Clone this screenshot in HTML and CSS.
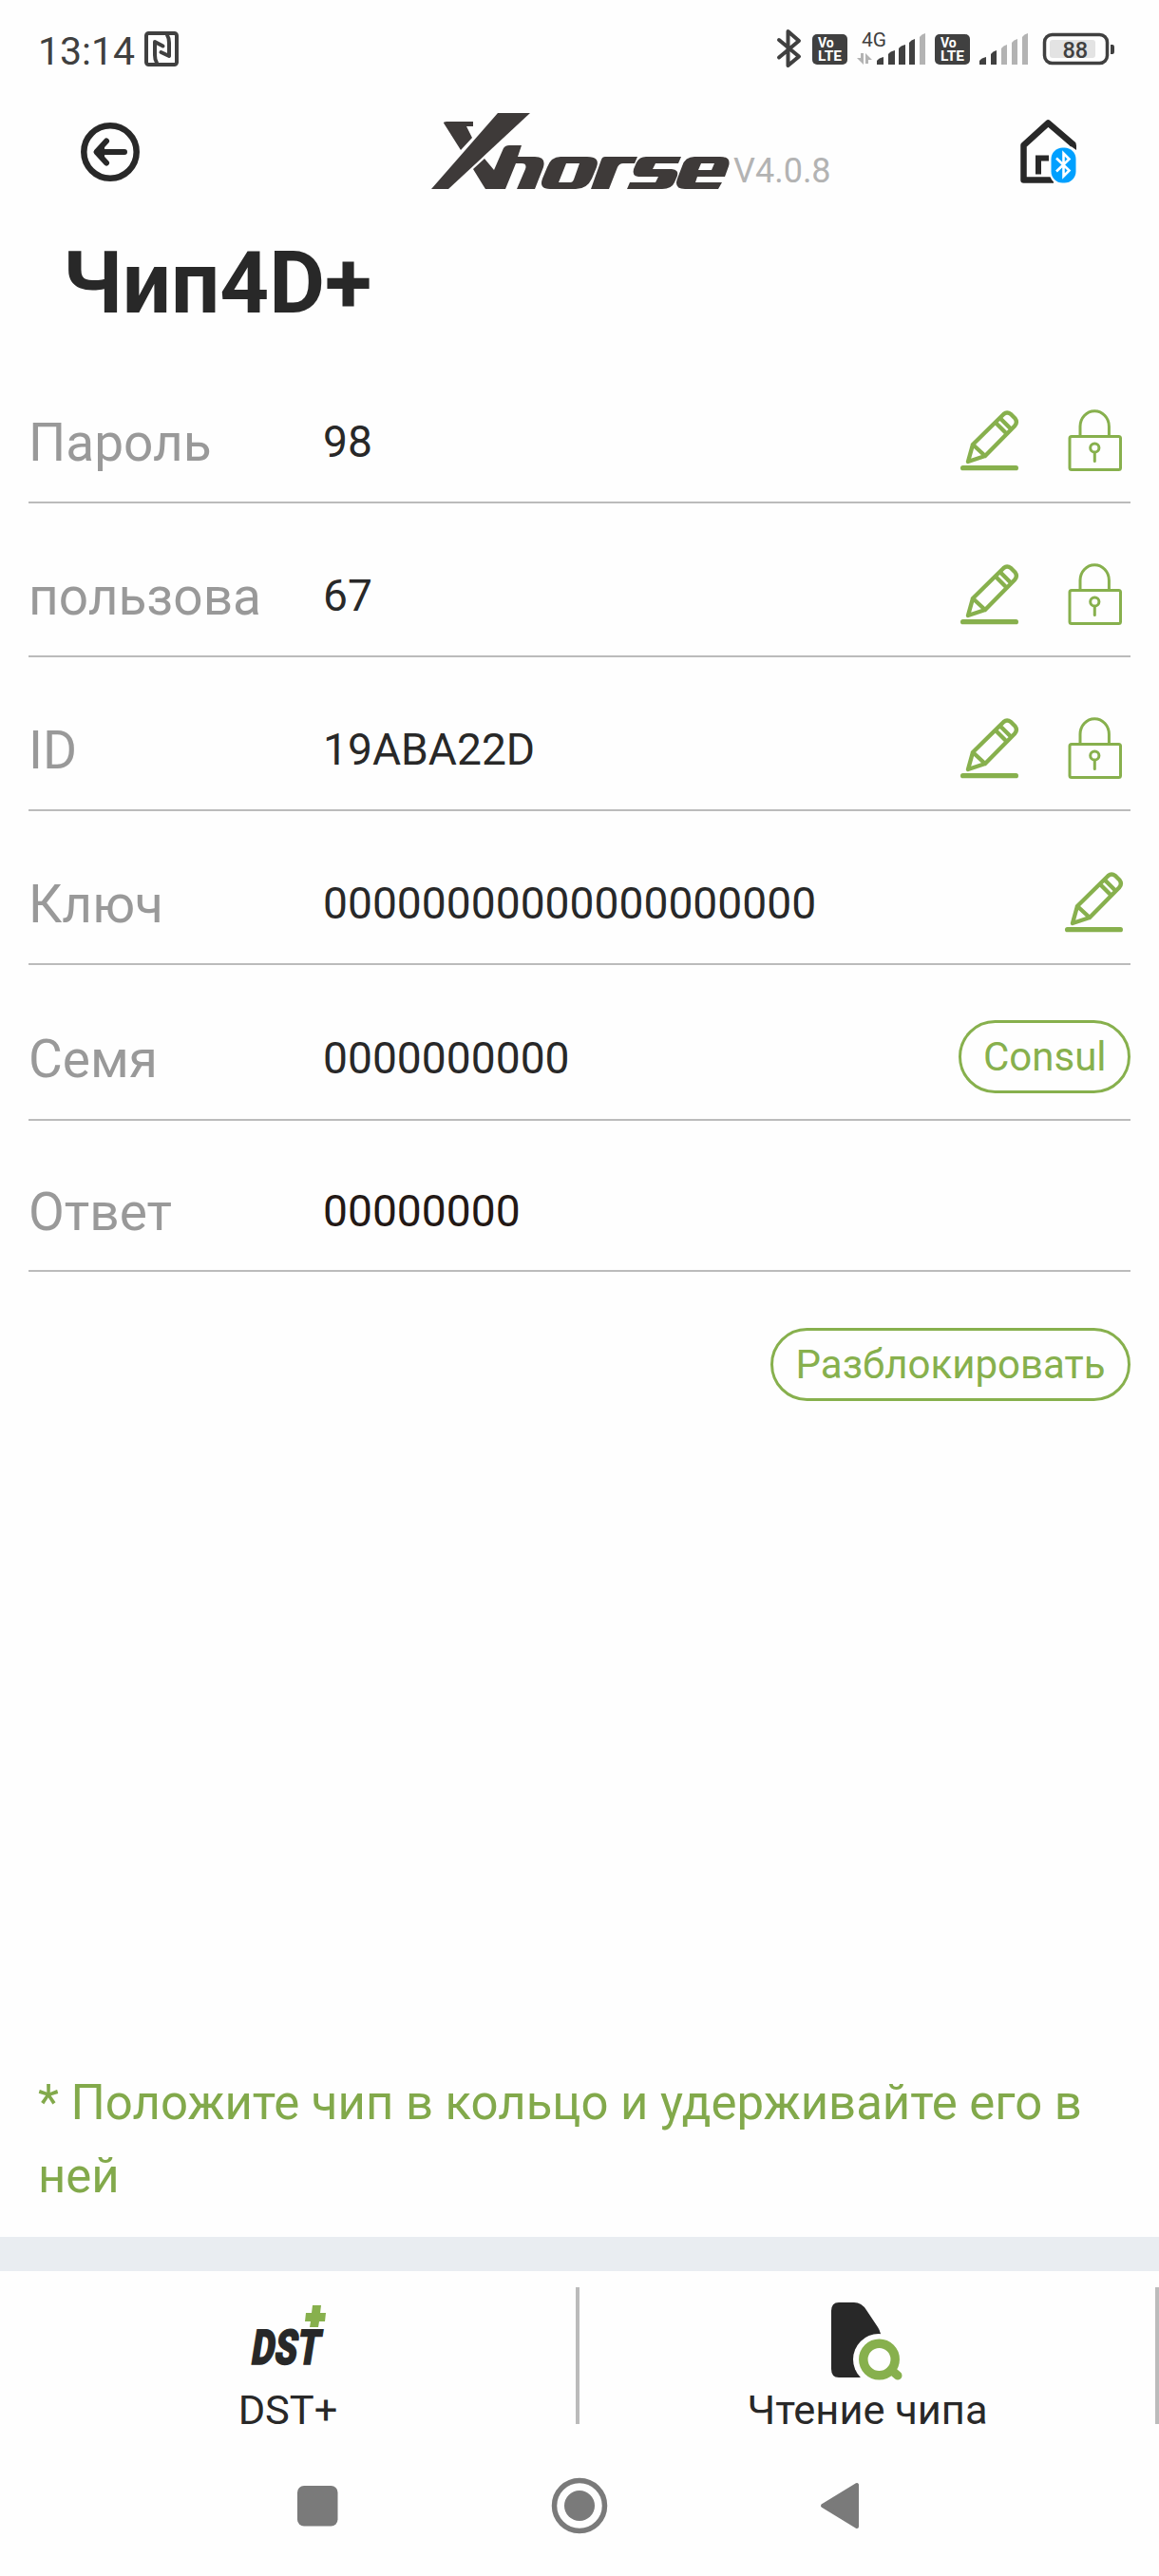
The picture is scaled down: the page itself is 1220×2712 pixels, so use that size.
FILE: index.html
```html
<!DOCTYPE html>
<html lang="ru">
<head>
<meta charset="utf-8">
<title>Чип4D+</title>
<link rel="stylesheet" href="styles.css">
</head>
<body>
<svg class="defs" width="0" height="0">
  <symbol id="pencil" viewBox="0 0 64 68">
    <g fill="none" stroke="#87b04d" stroke-linejoin="round" stroke-linecap="round">
      <path stroke-width="5.200" d="M3.600 62.700H59.400"/>
      <path stroke-width="4.400" d="M9 56 14 38 46.500 6Q50 3 54 6L58.500 10.500Q61.500 14.500 58 18.500L27 50ZM14 38 27 50M38 15 49.500 26.500M43 10.500 54.500 22"/>
    </g>
  </symbol>
  <symbol id="lock" viewBox="0 0 64 68">
    <g fill="none" stroke="#87b04d" stroke-width="3">
      <path d="M17 29V19a15 16 0 0 1 30.400 0V29"/>
      <rect x="6" y="29.500" width="53.500" height="35" rx="2"/>
      <circle cx="32.300" cy="41.500" r="4.600"/>
      <path stroke-linecap="round" d="M32.300 46.500V55.500"/>
    </g>
  </symbol>
</svg>
<header class="status">
  <span class="time">13:14</span>
  <svg class="nfc" viewBox="0 0 36 37" fill="none" stroke="#404040">
    <rect x="2" y="2" width="32" height="33" rx="2.500" stroke-width="4"/>
    <path stroke-width="4" stroke-linejoin="round" stroke-linecap="round" d="M13 33Q11 30 11 25V11L19.500 15.500M17.500 22 26 26V12Q26 7 24 4"/>
  </svg>
  <svg class="tray" viewBox="810 28 370 46">
    <path fill="none" stroke="#404040" stroke-width="4" stroke-linejoin="round" stroke-linecap="round" d="M820 42 841 59.500 829.500 69V33L841 43 820 60.500"/>
    <g id="volte"><rect x="855" y="36" width="37" height="32" rx="5" fill="#404040"/>
    <text x="861" y="50" class="badge">Vo</text><text x="861" y="63.500" class="badge" textLength="25" lengthAdjust="spacingAndGlyphs">LTE</text></g>
    <use href="#volte" x="129"/>
    <text x="907" y="49" class="net" textLength="26" lengthAdjust="spacingAndGlyphs">4G</text>
    <path fill="#b3b3b3" d="M906 56h3v12l-7-7h4zM911 67v-11l7 7h-4v4z"/>
    <g fill="#404040">
      <path d="M923 68v-4q2-3 7-4v8zM935 68V57q2-3 7-4v15zM946 68V51q2-3 7-4v21zM957 68V45q2-3 6-4v27z"/>
      <path d="M1031 68v-4q2-3 7-4v8zM1043 68V57q2-3 6-4v15z"/>
    </g>
    <g fill="#b3b3b3">
      <path d="M968 68V39q2-3 6-4v33zM1054 68V51q2-3 6-4v21zM1065 68V45q2-3 6-4v27zM1076 68V39q2-3 6-4v33z"/>
    </g>
    <rect x="1099.500" y="36.500" width="66" height="30" rx="8" fill="none" stroke="#404040" stroke-width="3.500"/>
    <rect x="1105" y="42" width="48" height="19" rx="3" fill="#e3e3e3"/>
    <path d="M1169 47h2q2 0 2 3v4q0 3-2 3h-2z" fill="#404040"/>
    <text x="1118.500" y="61.300" class="charge">88</text>
  </svg>
</header>
<nav class="appbar">
  <svg class="back" viewBox="0 0 64 64" fill="none" stroke="#282828" stroke-linecap="round" stroke-linejoin="round">
    <circle cx="32" cy="32" r="27.700" stroke-width="6.500"/>
    <path stroke-width="6" d="M47 32H19M28 20.500 17.500 32 28 43.500"/>
    <path fill="#282828" stroke="none" d="M15 32 26 22V42Z"/>
  </svg>
  <svg class="logo" viewBox="0 0 316 84" role="img" aria-label="Xhorse">
    <g fill="#3e3a39">
      <path d="M0 81 70 1H104L18 81Z"/>
      <path d="M13 11.500Q13 10 16 10H44V15H37L43 27 31 40Z"/>
      <path d="M44 60 56 49 66 61 76 38Q78 35 82 35H95L91 47H109Q121 47 118 58L109 81H90L99 60Q101 54 95 54H89L78 81H57Z"/>
      <path fill-rule="evenodd" d="M136 47H164Q178 47 174 58L169 70Q164 81 152 81H125Q113 81 117 70L122 58Q126 47 136 47ZM142 54 134 74H147Q149 74 150 71L156 54Z"/>
      <path d="M183 47H217L214 54H202Q198 54 196 58L187 81H168L179 50Q180 47 183 47Z"/>
      <path d="M226 47H263L260 54H236L233 60H253Q261 61 259 67L256 74Q253 81 243 81H206L209 74H236L239 68H218Q211 67 213 60L216 53Q219 47 226 47Z"/>
      <path fill-rule="evenodd" d="M277 47H304Q316 47 313 57L309 68H280L278 74H306L302 81H267Q255 81 259 70L264 57Q267 47 277 47ZM284 54 281 61H295L298 54Z"/>
    </g>
  </svg>
  <span class="version">V4.0.8</span>
  <svg class="home" viewBox="0 0 64 72">
    <path fill="none" stroke="#282828" stroke-width="6.500" stroke-linejoin="round" d="M56.500 30V28L30.300 5.500 4.500 29V65.500H36"/>
    <path fill="none" stroke="#282828" stroke-width="6" d="M20 59.500V42.500H31"/>
    <rect x="31.500" y="30" width="30" height="41" rx="14" fill="#fefefe"/>
    <path fill="#282828" d="M57 27 60 29V34L53 29Z"/>
    <rect x="33.500" y="31.500" width="26" height="37" rx="12" fill="#00a0ff"/>
    <path fill="none" stroke="#fff" stroke-width="2.600" d="M39 42.500 52.500 55.500 46.500 61.500V37.500L52.500 43.500 39 56.500"/>
  </svg>
</nav>
<h1 class="title">Чип4D+</h1>
<main class="fields">
  <div class="row"><span class="label">Пароль</span><span class="value">98</span><svg class="icon"><use href="#pencil"/></svg><svg class="icon"><use href="#lock"/></svg></div>
  <div class="row"><span class="label">пользова</span><span class="value">67</span><svg class="icon"><use href="#pencil"/></svg><svg class="icon"><use href="#lock"/></svg></div>
  <div class="row"><span class="label">ID</span><span class="value">19ABA22D</span><svg class="icon"><use href="#pencil"/></svg><svg class="icon"><use href="#lock"/></svg></div>
  <div class="row"><span class="label">Ключ</span><span class="value">00000000000000000000</span><svg class="icon"><use href="#pencil"/></svg></div>
  <div class="row row-seed"><span class="label">Семя</span><span class="value">0000000000</span><button class="pill consul">Consul</button></div>
  <div class="row row-answer"><span class="label">Ответ</span><span class="value">00000000</span></div>
  <button class="pill unlock">Разблокировать</button>
</main>
<p class="hint">* Положите чип в кольцо и удерживайте его в ней</p>
<div class="band"></div>
<footer class="tabs">
  <div class="tab">
    <svg class="tab-icon" viewBox="258 2420 90 90">
      <path fill="#87b04d" d="M329 2427h9l-1 8h6l-1 9h-6l-1 6h-9l1-6h-6l1-9h6z"/>
      <text class="dst" transform="translate(263 2489) skewX(-9)" textLength="72" lengthAdjust="spacingAndGlyphs">DST</text>
    </svg>
    <span>DST+</span>
  </div>
  <div class="tab">
    <svg class="tab-icon" viewBox="868 2420 90 90">
      <path fill="#282828" d="M883 2424H899Q907 2424 912 2432L924 2450Q928 2456 928 2466L930 2503H883Q875 2503 875 2494V2433Q875 2424 883 2424Z"/>
      <circle cx="925" cy="2484" r="27" fill="#fefefe"/>
      <path d="M927 2458h20v45h-20z" fill="#fefefe"/>
      <circle cx="925.500" cy="2484" r="16.700" fill="none" stroke="#87b04d" stroke-width="9.500"/>
      <path d="M938 2495 945 2501" stroke="#87b04d" stroke-width="9" stroke-linecap="round"/>
    </svg>
    <span>Чтение чипа</span>
  </div>
</footer>
<div class="sysnav">
  <svg viewBox="0 2591 1220 100" fill="#7a7a7a">
    <rect x="313" y="2617" width="42.500" height="42.500" rx="7"/>
    <circle cx="610" cy="2638" r="26.500" fill="none" stroke="#7a7a7a" stroke-width="5.500"/>
    <circle cx="610" cy="2638" r="16"/>
    <path stroke="#7a7a7a" stroke-width="4" stroke-linejoin="round" d="M866 2638 902 2616V2660Z"/>
  </svg>
</div>
</body>
</html>
```
FILE: styles.css
```css
* { box-sizing: border-box; }
body {
  margin: 0;
  width: 1220px;
  height: 2712px;
  display: flex;
  flex-direction: column;
  background: #fefefe;
  color: #282828;
  font-family: Roboto, sans-serif;
  overflow: hidden;
}
svg { display: block; flex: none; }
.defs { display: none; }
.status { display: flex; height: 104px; padding: 28px 40px 0; align-items: flex-start; color: #404040; }
.time { width: 112px; font-size: 41px; line-height: 52px; white-space: nowrap; }
.nfc { width: 36px; height: 37px; margin-top: 5px; }
.tray { width: 370px; height: 46px; margin-left: auto; }
.badge { font-size: 14px; font-weight: 700; fill: #fff; }
.net { font-size: 21px; fill: #404040; }
.charge { font-size: 23.500px; font-weight: 500; fill: #404040; }
.appbar { display: flex; height: 126px; padding: 14px 83px 0 84px; }
.back { width: 64px; height: 64px; margin-top: 10px; }
.logo { width: 316px; height: 84px; margin-left: 306px; }
.version { margin: 38px 0 0 2px; font-size: 36px; line-height: 48px; color: #b3b3b3; white-space: nowrap; }
.home { width: 64px; height: 72px; margin: 6px 0 0 auto; }
.title { margin: 0; padding: 2px 0 0 66px; height: 138px; font-size: 90.500px; line-height: 132px; font-weight: 700; }
.fields { display: flex; flex-direction: column; padding: 0 30px; }
.row { display: flex; height: 162px; padding-top: 60px; border-bottom: 2px solid #bbb; }
.row-seed { height: 164px; padding-top: 61px; }
.row-answer { height: 159px; padding-top: 58px; }
.row-answer .value { color: #231815; }
.label { width: 310px; font-size: 55px; line-height: 76px; color: #999; }
.value { flex: 1; font-size: 46.200px; line-height: 74px; }
.icon { width: 64px; height: 68px; margin: 2px 6px 0 40px; }
.pill {
  height: 77px;
  padding: 0 23px;
  border: 3px solid #87b04d;
  border-radius: 39px;
  background: none;
  color: #87b04d;
  font: 400 42px/68px Roboto, sans-serif;
  white-space: nowrap;
}
.consul { width: 181px; margin-top: -3px; }
.unlock { width: 379px; align-self: flex-end; margin-top: 59px; }
.hint { margin: auto 0 0; padding: 0 40px 26px; font-size: 50.900px; line-height: 77px; color: #82a94b; }
.band { height: 36px; background: #e9edf1; }
.tabs { display: flex; height: 200px; padding-top: 17px; }
.tab { display: flex; flex-direction: column; align-items: center; width: 610px; height: 144px; border-right: 4px solid #bbb; font-size: 43.400px; line-height: 56px; white-space: nowrap; }
.tab-icon { width: 90px; height: 90px; margin-top: 12px; overflow: visible; }
.dst { font-size: 51px; font-weight: 900; fill: #282828; stroke: #282828; stroke-width: 1.500px; }
.sysnav { height: 121px; }
.sysnav svg { width: 1220px; height: 100px; }
```
